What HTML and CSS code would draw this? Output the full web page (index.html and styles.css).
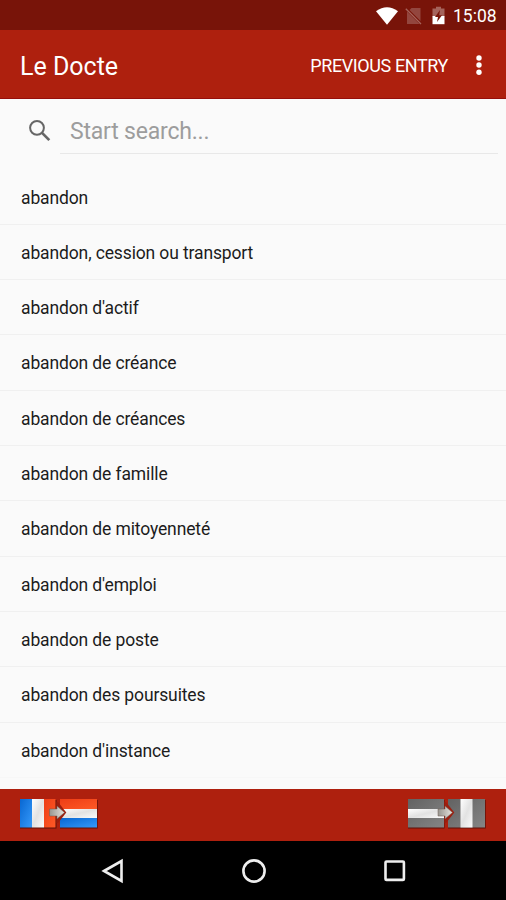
FILE: index.html
```html
<!DOCTYPE html>
<html lang="fr">
<head>
    <meta charset="UTF-8">
    <meta name="viewport" content="width=device-width, initial-scale=1.0">
    <title>Le Docte</title>
    <link rel="stylesheet" href="styles.css">
</head>
<body>
    <div class="status-bar">
        <svg class="wifi" width="24" height="20" viewBox="0 0 24 20"><path d="M12 18.8 L1 5.2 Q12 -2.8 23 5.2 Z" fill="#fff"/></svg>
        <svg class="no-sim" width="17" height="18" viewBox="0 0 17 18"><path d="M4.5 3 L6.5 1 H15.5 V14 Z M2 4.5 L14.5 17 H2 Z" fill="#93463e"/><path d="M.8 1.8 L16 17" stroke="#a5635b" stroke-width="1.3"/></svg>
        <svg class="battery" width="13" height="19" viewBox="0 0 13 19"><path d="M4 .8 H9 V2.5 H12.5 V10.5 H.5 V2.5 H4 Z" fill="#a5635b"/><path d="M.5 10 H12.5 V18.2 H.5 Z" fill="#fff"/><path d="M8 4 L3 11 H6 L5 16 L10 9.3 H7.2 Z" fill="#781409"/></svg>
        <span class="clock">15:08</span>
    </div>

    <div class="header">
        <h1>Le Docte</h1>
        <button class="previous">PREVIOUS ENTRY</button>
        <button class="more">
            <svg width="6" height="22" viewBox="0 0 6 22" fill="#fff"><circle cx="3" cy="3" r="2.7"/><circle cx="3" cy="10" r="2.7"/><circle cx="3" cy="17.3" r="2.7"/></svg>
        </button>
    </div>

    <div class="search">
        <svg width="24" height="24" viewBox="0 0 24 24" fill="none" stroke="#666"><circle cx="9" cy="8.8" r="6.9" stroke-width="2"/><path d="M13.8 13.6 L21.3 21.1" stroke-width="2.7"/></svg>
        <input type="text" placeholder="Start search...">
    </div>

    <ul class="entries">
        <li>abandon</li>
        <li>abandon, cession ou transport</li>
        <li>abandon d'actif</li>
        <li>abandon de créance</li>
        <li>abandon de créances</li>
        <li>abandon de famille</li>
        <li>abandon de mitoyenneté</li>
        <li>abandon d'emploi</li>
        <li>abandon de poste</li>
        <li>abandon des poursuites</li>
        <li>abandon d'instance</li>
    </ul>

    <div class="languages">
        <svg width="82" height="34" viewBox="0 0 82 34">
            <defs>
                <linearGradient id="blue" x2="1" y2="1"><stop offset="0" stop-color="#0867d2"/><stop offset="1" stop-color="#3599fa"/></linearGradient>
                <linearGradient id="white" x2="1" y2="1"><stop offset="0" stop-color="#fff"/><stop offset=".5" stop-color="#e2e2e2"/><stop offset="1" stop-color="#fafafa"/></linearGradient>
                <linearGradient id="red" x2="1" y2="1"><stop offset="0" stop-color="#ed3d16"/><stop offset="1" stop-color="#ff5a26"/></linearGradient>
                <linearGradient id="arrow" x2="1" y2="0"><stop offset="0" stop-color="#989690"/><stop offset="1" stop-color="#e6e4de"/></linearGradient>
            </defs>
            <path class="shade" d="M2 3 H38.5 V31.5 H2 Z M42 3 H79.7 V31.5 H42 Z"/>
            <path d="M2 2 H14 V30.5 H2 Z" fill="url(#blue)"/>
            <path d="M14 2 H26 V30.5 H14 Z" fill="url(#white)"/>
            <path d="M26 2 H37.5 V30.5 H26 Z" fill="url(#red)"/>
            <path d="M42 2 H79 V12 H42 Z" fill="url(#red)"/>
            <path d="M42 12 H79 V21 H42 Z" fill="url(#white)"/>
            <path d="M42 21 H79 V30.5 H42 Z" fill="url(#blue)"/>
            <path class="notch" d="M38.5 5 H40 L48.3 15.5 L40 26 H38.5 Z"/>
            <path class="arrow" d="M31.5 12 H39 V9 L46.5 15.5 L39 22 V19 H31.5 Z" fill="url(#arrow)"/>
        </svg>
        <svg width="82" height="34" viewBox="0 0 82 34">
            <defs>
                <linearGradient id="dark" x2="1" y2="1"><stop offset="0" stop-color="#626262"/><stop offset="1" stop-color="#858585"/></linearGradient>
            </defs>
            <path class="shade" d="M2 3 H38.5 V31.5 H2 Z M42 3 H79.7 V31.5 H42 Z"/>
            <path d="M2 2 H38 V30.5 H2 Z" fill="url(#dark)"/>
            <path d="M2 12 H38 V21 H2 Z" fill="url(#white)"/>
            <path d="M42 2 H79 V30.5 H42 Z" fill="url(#dark)"/>
            <path d="M54.5 2 H66.5 V30.5 H54.5 Z" fill="url(#white)"/>
            <path class="notch" d="M38.5 5 H40 L48.3 15.5 L40 26 H38.5 Z"/>
            <path class="arrow" d="M32 12 H39 V9 L46.5 15.5 L39 22 V19 H32 Z" fill="url(#arrow)"/>
        </svg>
    </div>

    <div class="nav-bar">
        <svg width="24" height="26" viewBox="0 0 24 26"><path d="M3 13 L20.5 3 V23 Z"/></svg>
        <svg width="26" height="26" viewBox="0 0 26 26"><circle cx="13" cy="13" r="10.6"/></svg>
        <svg width="24" height="26" viewBox="0 0 24 26"><rect x="2.5" y="3.5" width="18.4" height="18.4" rx="1"/></svg>
    </div>
</body>
</html>
```
FILE: styles.css
```css
* { box-sizing: border-box; }
body { margin: 0; height: 900px; display: flex; flex-direction: column; overflow: hidden; font-family: Roboto, sans-serif; background-color: #fafafa; }
svg { display: block; flex: none; }
button { padding: 0; border: none; background: none; color: white; font-family: inherit; cursor: pointer; }

.status-bar { height: 30px; flex: none; display: flex; align-items: center; justify-content: flex-end; padding: 1px 9px 0 0; background-color: #781409; color: white; }
.no-sim { margin-left: 6px; }
.battery { margin-left: 10px; }
.clock { margin-left: 8px; width: 44px; font-size: 17.5px; line-height: 28px; white-space: nowrap; }

.header { height: 69px; flex: none; display: flex; align-items: center; padding: 3px 24px 0 20px; background-color: #ae200e; border-bottom: 1px solid #960f0b; color: white; }
.header h1 { flex: 1; margin: 0; padding-top: 1px; font-size: 25px; font-weight: 400; }
.previous { font-size: 18px; letter-spacing: -0.4px; }
.more { margin-left: 28px; }

.search { height: 70.6px; flex: none; display: flex; align-items: flex-start; padding: 11px 8px 0 28px; }
.search svg { margin-top: 9px; }
.search input { flex: 1; height: 44px; margin-left: 8px; padding: 0 10px; border: none; border-bottom: 1px solid #e8e8e8; outline: none; background: none; font-family: inherit; font-size: 23px; letter-spacing: -0.2px; }
.search input::placeholder { color: #9d9d9d; opacity: 1; }

.entries { flex: 1; margin: 0; padding: 0; list-style: none; }
.entries li { height: 55.3px; padding-left: 21px; border-bottom: 1px solid #f0f0f0; font-size: 17.5px; letter-spacing: -0.13px; line-height: 57px; color: #1c1c1c; }
.entries li:last-child { border-bottom-color: #f7f7f7; }

.languages { height: 52px; flex: none; display: flex; justify-content: space-between; align-items: flex-start; padding: 8px 18px 0; background-color: #ae200e; }
.shade { fill: #5c1008; }
.notch { fill: #9c1e0e; }
.arrow { stroke: #6d5a52; stroke-width: .5; }

.nav-bar { height: 59px; flex: none; display: flex; justify-content: space-between; align-items: center; padding: 0 99px 0 101px; background-color: #000; }
.nav-bar svg { fill: none; stroke: #eee; stroke-width: 2.6; }
```
